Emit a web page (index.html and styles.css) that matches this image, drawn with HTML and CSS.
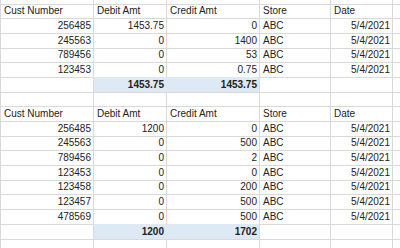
FILE: index.html
```html
<!DOCTYPE html>
<html>
<head>
<meta charset="utf-8">
<link rel="stylesheet" href="styles.css">
</head>
<body>
<div class="sheet">
  <div class="c"></div><div class="c"></div><div class="c"></div><div class="c"></div><div class="c"></div><div class="c"></div>

  <div class="c t">Cust Number</div><div class="c t">Debit Amt</div><div class="c t">Credit Amt</div><div class="c t">Store</div><div class="c t">Date</div><div class="c t"></div>
  <div class="c t n">256485</div><div class="c t n">1453.75</div><div class="c t n">0</div><div class="c t">ABC</div><div class="c t n">5/4/2021</div><div class="c t"></div>
  <div class="c t n">245563</div><div class="c t n">0</div><div class="c t n">1400</div><div class="c t">ABC</div><div class="c t n">5/4/2021</div><div class="c t"></div>
  <div class="c t n">789456</div><div class="c t n">0</div><div class="c t n">53</div><div class="c t">ABC</div><div class="c t n">5/4/2021</div><div class="c t"></div>
  <div class="c t n">123453</div><div class="c t n">0</div><div class="c t n">0.75</div><div class="c t">ABC</div><div class="c t n">5/4/2021</div><div class="c t"></div>
  <div class="c t"></div><div class="c t n sum">1453.75</div><div class="c t n sum">1453.75</div><div class="c t"></div><div class="c t"></div><div class="c t"></div>
  <div class="c t"></div><div class="c t"></div><div class="c t"></div><div class="c t"></div><div class="c t"></div><div class="c t"></div>

  <div class="c t">Cust Number</div><div class="c t">Debit Amt</div><div class="c t">Credit Amt</div><div class="c t">Store</div><div class="c t">Date</div><div class="c t"></div>
  <div class="c t n">256485</div><div class="c t n">1200</div><div class="c t n">0</div><div class="c t">ABC</div><div class="c t n">5/4/2021</div><div class="c t"></div>
  <div class="c t n">245563</div><div class="c t n">0</div><div class="c t n">500</div><div class="c t">ABC</div><div class="c t n">5/4/2021</div><div class="c t"></div>
  <div class="c t n">789456</div><div class="c t n">0</div><div class="c t n">2</div><div class="c t">ABC</div><div class="c t n">5/4/2021</div><div class="c t"></div>
  <div class="c t n">123453</div><div class="c t n">0</div><div class="c t n">0</div><div class="c t">ABC</div><div class="c t n">5/4/2021</div><div class="c t"></div>
  <div class="c t n">123458</div><div class="c t n">0</div><div class="c t n">200</div><div class="c t">ABC</div><div class="c t n">5/4/2021</div><div class="c t"></div>
  <div class="c t n">123457</div><div class="c t n">0</div><div class="c t n">500</div><div class="c t">ABC</div><div class="c t n">5/4/2021</div><div class="c t"></div>
  <div class="c t n">478569</div><div class="c t n">0</div><div class="c t n">500</div><div class="c t">ABC</div><div class="c t n">5/4/2021</div><div class="c t"></div>
  <div class="c t"></div><div class="c t n sum">1200</div><div class="c t n sum">1702</div><div class="c t"></div><div class="c t"></div><div class="c t"></div>
  <div class="c t"></div><div class="c t"></div><div class="c t"></div><div class="c t"></div><div class="c t"></div><div class="c t"></div>
</div>
</body>
</html>
```
FILE: styles.css
```css
html, body {
  margin: 0;
  padding: 0;
  background: #ffffff;
}
body {
  width: 400px;
  height: 248px;
  overflow: hidden;
}
.sheet {
  display: grid;
  grid-template-columns: 93px 73px 93px 71px 62px 8px;
  grid-template-rows: 4px 14px 15px 15px 14px 15px 15px 14px 15px 15px 14px 15px 15px 14px 15px 15px 15px 9px;
  font-family: "Liberation Sans", Arial, sans-serif;
  font-size: 10px;
  color: #222222;
}
.c {
  box-sizing: border-box;
  border-left: 1px solid #d9d9d9;
  padding: 0 2px 1px 3px;
  display: flex;
  align-items: flex-end;
  line-height: 12px;
  white-space: nowrap;
  overflow: hidden;
}
.t {
  border-top: 1px solid #d9d9d9;
}
.n {
  justify-content: flex-end;
}
.sum {
  background: #dde9f5;
  font-weight: bold;
  border-top-color: #dde9f5;
}
.sum + .sum {
  border-left-color: #dde9f5;
}
```
